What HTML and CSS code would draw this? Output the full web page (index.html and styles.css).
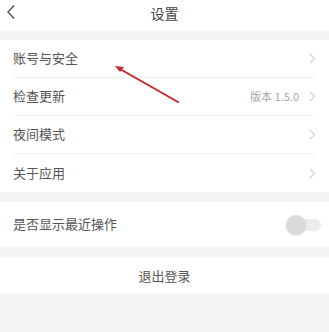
FILE: index.html
```html
<!DOCTYPE html>
<html lang="zh">
<head>
<meta charset="utf-8">
<link rel="stylesheet" href="styles.css">
</head>
<body>
<div class="page">
  <header class="header">
    <svg class="back" width="10" height="16" viewBox="0 0 10 16"><path d="M8 1.5 L2 8 L8 14.5" fill="none" stroke="#555" stroke-width="1.4"/></svg>
    <div class="title">设置</div>
  </header>
  <div class="gap g1"></div>
  <section class="group">
    <div class="row"><span class="label">账号与安全</span><span class="right"><svg class="chev" width="7" height="11" viewBox="0 0 7 11"><path d="M1 1 L5.5 5.5 L1 10" fill="none" stroke="#d0d0d0" stroke-width="1.1"/></svg></span></div>
    <div class="row"><span class="label">检查更新</span><span class="right"><span class="ver">版本 1.5.0</span><svg class="chev" width="7" height="11" viewBox="0 0 7 11"><path d="M1 1 L5.5 5.5 L1 10" fill="none" stroke="#d0d0d0" stroke-width="1.1"/></svg></span></div>
    <div class="row"><span class="label">夜间模式</span><span class="right"><svg class="chev" width="7" height="11" viewBox="0 0 7 11"><path d="M1 1 L5.5 5.5 L1 10" fill="none" stroke="#d0d0d0" stroke-width="1.1"/></svg></span></div>
    <div class="row last"><span class="label">关于应用</span><span class="right"><svg class="chev" width="7" height="11" viewBox="0 0 7 11"><path d="M1 1 L5.5 5.5 L1 10" fill="none" stroke="#d0d0d0" stroke-width="1.1"/></svg></span></div>
  </section>
  <div class="gap"></div>
  <section class="group">
    <div class="row tall last"><span class="label">是否显示最近操作</span><span class="toggle"><span class="knob"></span></span></div>
  </section>
  <div class="gap"></div>
  <section class="group">
    <div class="logout">退出登录</div>
  </section>
  <div class="rest"></div>
  <svg class="arrow" width="329" height="332" viewBox="0 0 329 332">
    <line x1="178" y1="102" x2="120" y2="69" stroke="#c8252a" stroke-width="2" stroke-linecap="round"/>
    <path d="M115 66 L124 67 L120 72 Z" fill="#c8252a"/>
  </svg>
</div>
</body>
</html>
```

FILE: styles.css
```css
* { box-sizing: border-box; }
html, body { margin: 0; padding: 0; }
body {
  background: #f5f5f5;
  font-family: "Noto Sans CJK SC", "Liberation Sans", sans-serif;
  color: #555;
}
.page {
  position: relative;
  width: 329px;
  height: 332px;
  overflow: hidden;
  display: flex;
  flex-direction: column;
}
.header {
  height: 31px;
  background: #fff;
  position: relative;
  display: flex;
  align-items: center;
  justify-content: center;
}
.back { position: absolute; left: 6px; top: 4px; }
.title { font-size: 14px; color: #444; line-height: 1; margin-top: -6px; }
.gap { height: 10px; flex: none; }
.g1 { height: 9px; }
.group { background: #fff; }
.row {
  height: 38px;
  margin-left: 13px;
  margin-right: 14px;
  display: flex;
  align-items: center;
  justify-content: space-between;
  border-bottom: 1px solid #f0f0f0;
}
.row.last { border-bottom: none; }
.row.tall { height: 45px; margin-right: 8px; }
.label { font-size: 13px; color: #555; line-height: 1; margin-top: -2px; }
.right { display: flex; align-items: center; gap: 10px; }
.ver { font-size: 11px; color: #a8a8a8; line-height: 1; }
.chev { display: block; margin-right: -1px; }
.toggle {
  position: relative;
  width: 35px;
  height: 20px;
  display: block;
}
.toggle::before {
  content: "";
  position: absolute;
  left: 4px;
  right: 0;
  top: 4px;
  height: 12px;
  border-radius: 6px;
  background: #ececec;
}
.knob {
  position: absolute;
  left: 0;
  top: 0;
  width: 20px;
  height: 20px;
  border-radius: 50%;
  background: #d9d9d9;
  box-shadow: 0 1px 2px rgba(0,0,0,0.12);
}
.logout {
  height: 36px;
  display: flex;
  align-items: center;
  justify-content: center;
  font-size: 13px;
  color: #555;
}
.rest { flex: 1; }
.arrow { position: absolute; left: 0; top: 0; pointer-events: none; }
```
